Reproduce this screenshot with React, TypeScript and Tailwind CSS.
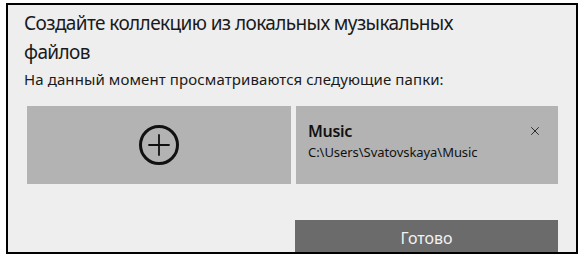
import { X } from "lucide-react";

const FOLDERS = [{ name: "Music", path: "C:\\Users\\Svatovskaya\\Music" }];

export default function App() {
  return (
    <div className="w-[580px] h-[261px] bg-white pt-[3px] pl-[6px] font-['Noto_Sans',sans-serif]">
      <div className="relative w-[572px] h-[251px] overflow-hidden border-2 border-black bg-[#eeeeee] flex flex-col pl-[16px] pr-[18px]">
        {/* Heading */}
        <h1 className="shrink-0 mt-[4px] text-[19px] leading-[29px] text-[#1a1a1a] tracking-[-0.6px]">
          Создайте коллекцию из локальных музыкальных
          <br />
          файлов
        </h1>
        <p className="shrink-0 mt-[2px] text-[15px] leading-[20px] text-[#1a1a1a] tracking-[0.1px]">
          На данный момент просматриваются следующие папки:
        </p>

        {/* Folders */}
        <div className="shrink-0 mt-[17px] ml-[3px] flex gap-[5px] h-[78px]">
          <button className="w-[264px] bg-[#b3b3b3] flex items-center justify-center">
            <svg width="42" height="42" viewBox="0 0 42 42" fill="none" stroke="#111" strokeLinecap="round">
              <circle cx="21" cy="21" r="18.5" strokeWidth="3" />
              <path d="M21 11v20M11 21h20" strokeWidth="1.8" />
            </svg>
          </button>
          {FOLDERS.map((f) => (
            <div key={f.path} className="flex-1 bg-[#b3b3b3] pl-[12px] pr-[16px] pt-[15px] flex">
              <div className="flex-1">
                <p className="text-[16px] leading-[20px] font-semibold text-[#111] tracking-[-0.3px]">{f.name}</p>
                <p className="mt-[2px] text-[13px] leading-[18px] text-[#111] tracking-[-0.05px]">{f.path}</p>
              </div>
              <X className="w-[14px] h-[14px] mt-[3px] text-[#222]" strokeWidth={1.6} />
            </div>
          ))}
        </div>

        {/* Footer */}
        <div className="shrink-0 mt-[36px] flex justify-end">
          <button className="w-[263px] h-[37px] shrink-0 bg-[#6b6b6b] text-[16px] text-[#f2f2f2] pb-[2px]">
            Готово
          </button>
        </div>
      </div>
    </div>
  );
}
